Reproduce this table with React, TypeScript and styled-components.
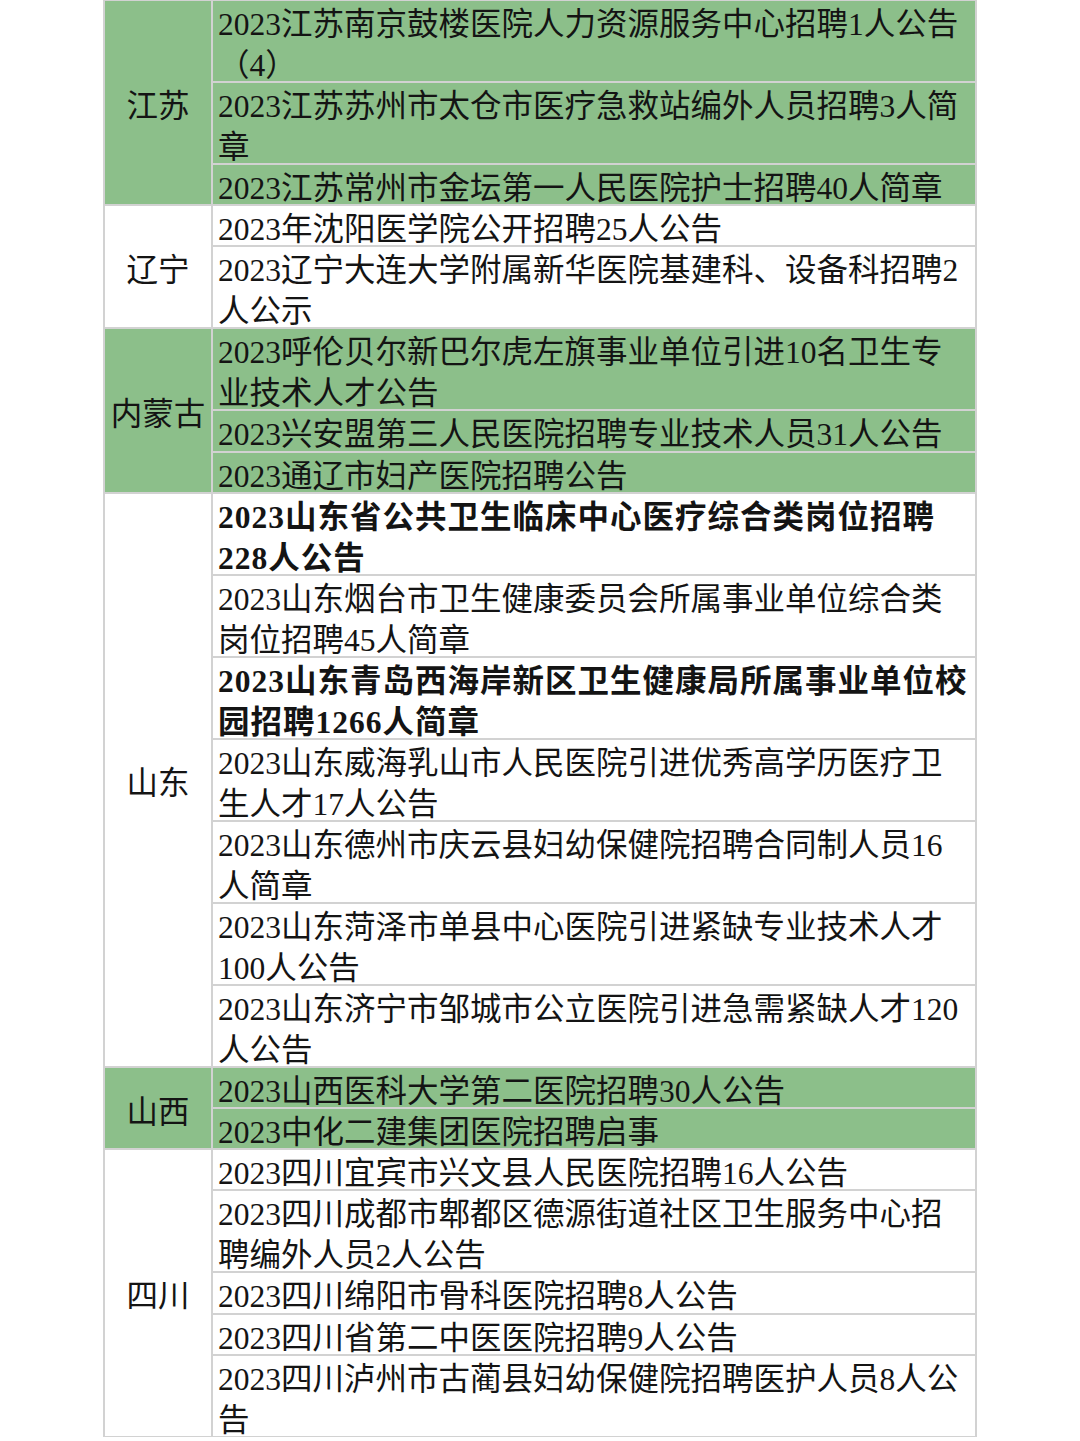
import React from 'react';
import styled, { createGlobalStyle } from 'styled-components';

type Item = { text: string; bold?: boolean };
type Group = { province: string; green: boolean; items: Item[] };

// line breaks follow the reference exactly
const groups: Group[] = [
  {
    province: '江苏',
    green: true,
    items: [
      { text: '2023江苏南京鼓楼医院人力资源服务中心招聘1人公告\n（4）' },
      { text: '2023江苏苏州市太仓市医疗急救站编外人员招聘3人简\n章' },
      { text: '2023江苏常州市金坛第一人民医院护士招聘40人简章' },
    ],
  },
  {
    province: '辽宁',
    green: false,
    items: [
      { text: '2023年沈阳医学院公开招聘25人公告' },
      { text: '2023辽宁大连大学附属新华医院基建科、设备科招聘2\n人公示' },
    ],
  },
  {
    province: '内蒙古',
    green: true,
    items: [
      { text: '2023呼伦贝尔新巴尔虎左旗事业单位引进10名卫生专\n业技术人才公告' },
      { text: '2023兴安盟第三人民医院招聘专业技术人员31人公告' },
      { text: '2023通辽市妇产医院招聘公告' },
    ],
  },
  {
    province: '山东',
    green: false,
    items: [
      { text: '2023山东省公共卫生临床中心医疗综合类岗位招聘\n228人公告', bold: true },
      { text: '2023山东烟台市卫生健康委员会所属事业单位综合类\n岗位招聘45人简章' },
      { text: '2023山东青岛西海岸新区卫生健康局所属事业单位校\n园招聘1266人简章', bold: true },
      { text: '2023山东威海乳山市人民医院引进优秀高学历医疗卫\n生人才17人公告' },
      { text: '2023山东德州市庆云县妇幼保健院招聘合同制人员16\n人简章' },
      { text: '2023山东菏泽市单县中心医院引进紧缺专业技术人才\n100人公告' },
      { text: '2023山东济宁市邹城市公立医院引进急需紧缺人才120\n人公告' },
    ],
  },
  {
    province: '山西',
    green: true,
    items: [
      { text: '2023山西医科大学第二医院招聘30人公告' },
      { text: '2023中化二建集团医院招聘启事' },
    ],
  },
  {
    province: '四川',
    green: false,
    items: [
      { text: '2023四川宜宾市兴文县人民医院招聘16人公告' },
      { text: '2023四川成都市郫都区德源街道社区卫生服务中心招\n聘编外人员2人公告' },
      { text: '2023四川绵阳市骨科医院招聘8人公告' },
      { text: '2023四川省第二中医医院招聘9人公告' },
      { text: '2023四川泸州市古蔺县妇幼保健院招聘医护人员8人公\n告' },
    ],
  },
];

export default function App() {
  return (
    <>
      <GlobalStyle />
      <Table>
        <colgroup>
          <col style={{ width: 108 }} />
          <col />
        </colgroup>
        <tbody>
          {groups.map((group) =>
            group.items.map((item, i) => (
              <tr key={group.province + i}>
                {i === 0 && (
                  <ProvinceCell rowSpan={group.items.length} $green={group.green}>
                    <CellText>{group.province}</CellText>
                  </ProvinceCell>
                )}
                <ItemCell $green={group.green} $bold={!!item.bold}>
                  <CellText>{item.text}</CellText>
                </ItemCell>
              </tr>
            ))
          )}
        </tbody>
      </Table>
    </>
  );
}

const GlobalStyle = createGlobalStyle`
  body {
    margin: 0;
    background: #fff;
    font-family: 'Liberation Serif', 'Noto Sans CJK SC', serif;
    color: #141414;
  }
`;

const GREEN = '#8cbf8a';
const LINE = '#d2d2d2';

const Table = styled.table`
  width: 872px;
  margin: 0 auto;
  border-collapse: separate;
  border-spacing: 0;
  table-layout: fixed;
  font-size: 31.5px;
  line-height: 41.05px;
  box-shadow: 0 0 0 1px ${LINE};
`;

// grid lines are drawn as inset shadows so they take no room, as in the source sheet
const Cell = styled.td<{ $green: boolean }>`
  padding: 0;
  vertical-align: middle;
  background: ${({ $green }) => ($green ? GREEN : '#fff')};
  box-shadow:
    inset 1px 1px 0 ${LINE},
    inset -1px -1px 0 ${LINE};
`;

const ProvinceCell = styled(Cell)`
  text-align: center;
  white-space: nowrap;
`;

const ItemCell = styled(Cell)<{ $bold: boolean }>`
  padding-left: 6px;
  white-space: pre;
  overflow: hidden;
  font-weight: ${({ $bold }) => ($bold ? 700 : 400)};
  letter-spacing: ${({ $bold }) => ($bold ? '1px' : '0')};
`;

// glyphs sit a little low in their lines in the reference
const CellText = styled.div`
  margin: 4px 0 -4px;
`;
